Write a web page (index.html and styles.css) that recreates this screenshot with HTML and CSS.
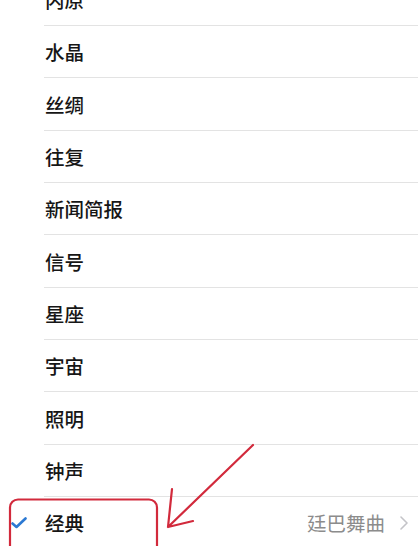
FILE: index.html
```html
<!DOCTYPE html>
<html lang="zh">
<head>
<meta charset="utf-8">
<title>铃声</title>
<link rel="stylesheet" href="styles.css">
</head>
<body>
<main class="screen">
  <ul class="list">
    <li class="row"><span class="label">内原</span></li>
    <li class="row"><span class="label">水晶</span></li>
    <li class="row"><span class="label">丝绸</span></li>
    <li class="row"><span class="label">往复</span></li>
    <li class="row"><span class="label">新闻简报</span></li>
    <li class="row"><span class="label">信号</span></li>
    <li class="row"><span class="label">星座</span></li>
    <li class="row"><span class="label">宇宙</span></li>
    <li class="row"><span class="label">照明</span></li>
    <li class="row"><span class="label">钟声</span></li>
    <li class="row selected">
      <svg class="check" viewBox="0 0 16 12" width="16" height="12"><path d="M1.5 6.5 L5.5 10 L14.5 1.5" fill="none" stroke="#2b79d3" stroke-width="2.6" stroke-linecap="round" stroke-linejoin="round"/></svg>
      <span class="label">经典</span>
      <span class="detail">廷巴舞曲</span>
      <svg class="chev" viewBox="0 0 8 14" width="8" height="14"><path d="M1 1 L7 7 L1 13" fill="none" stroke="#c4c4c8" stroke-width="1.6" stroke-linecap="round" stroke-linejoin="round"/></svg>
    </li>
  </ul>
  <svg class="annot" viewBox="0 0 418 546" width="418" height="546">
    <rect x="10" y="499.5" width="147" height="70" rx="8" ry="8" fill="none" stroke="#d22a3c" stroke-width="2.2"/>
    <path d="M253 445 L168 527 M172 489 L168 527 L193 521" fill="none" stroke="#d22a3c" stroke-width="2.2" stroke-linecap="round" stroke-linejoin="round"/>
  </svg>
</main>
</body>
</html>
```

FILE: styles.css
```css
html, body {
  margin: 0;
  padding: 0;
  background: #ffffff;
}

.screen {
  position: relative;
  width: 418px;
  height: 546px;
  overflow: hidden;
  background: #ffffff;
  font-family: "Noto Sans CJK SC", "Noto Sans", sans-serif;
}

.list {
  list-style: none;
  margin: -26.3px 0 0 0;
  padding: 0;
}

.row {
  position: relative;
  height: 52.33px;
  display: flex;
  align-items: center;
  padding-left: 45px;
  padding-right: 10px;
  box-sizing: border-box;
}

.row::after {
  content: "";
  position: absolute;
  left: 44px;
  right: 0;
  bottom: 0;
  height: 1px;
  background: #e3e3e3;
}

.label {
  font-size: 19.5px;
  font-weight: 500;
  color: #161616;
  line-height: 1;
}

.selected {
  padding-left: 0;
}

.check {
  width: 16px;
  margin-left: 11px;
  margin-right: 18px;
  flex: none;
}

.detail {
  margin-left: auto;
  font-size: 19.5px;
  color: #8c8c8c;
  line-height: 1;
}

.chev {
  margin-left: 15px;
  flex: none;
}

.annot {
  position: absolute;
  left: 0;
  top: 0;
  pointer-events: none;
}
```
